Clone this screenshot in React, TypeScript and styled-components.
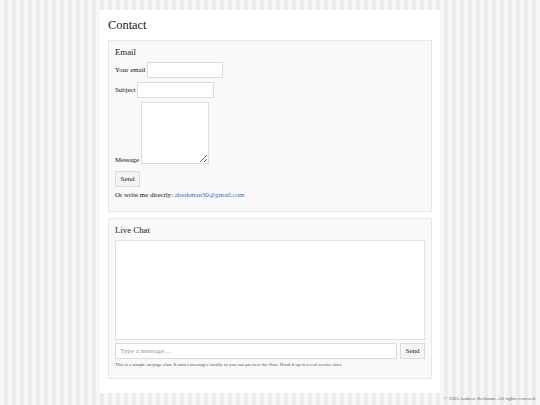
import styled, { createGlobalStyle } from 'styled-components';

const GlobalStyle = createGlobalStyle`
  html, body {
    margin: 0;
    padding: 0;
  }
  body {
    font-family: "Liberation Serif", "Times New Roman", serif;
    color: #111;
    background: repeating-linear-gradient(90deg, #f7f7f7 0 4px, #ececec 4px 8px);
    min-height: 405px;
  }
`;

const App = () => {
  return (
    <>
      <GlobalStyle />
      <StyleIn.Page>
        <StyleIn.Main>
          <StyleIn.Title>Contact</StyleIn.Title>

          <StyleIn.Panel>
            <StyleIn.PanelTitle>Email</StyleIn.PanelTitle>
            <StyleIn.Row>
              <label htmlFor="email">Your email</label>
              <StyleIn.Input id="email" type="email" $width={76} />
            </StyleIn.Row>
            <StyleIn.Row>
              <label htmlFor="subject">Subject</label>
              <StyleIn.Input id="subject" type="text" $width={77} />
            </StyleIn.Row>
            <StyleIn.Row $bottom>
              <label htmlFor="message">Message</label>
              <StyleIn.TextArea id="message" />
            </StyleIn.Row>
            <StyleIn.Button $width={25}>Send</StyleIn.Button>
            <StyleIn.Direct>
              Or write me directly: <a href="mailto:aberkman30@gmail.com">aberkman30@gmail.com</a>
            </StyleIn.Direct>
          </StyleIn.Panel>

          <StyleIn.Panel $bottom={10}>
            <StyleIn.PanelTitle>Live Chat</StyleIn.PanelTitle>
            <StyleIn.ChatLog />
            <StyleIn.ChatBar>
              <StyleIn.ChatInput type="text" placeholder="Type a message…" />
              <StyleIn.Button $width={25}>Send</StyleIn.Button>
            </StyleIn.ChatBar>
            <StyleIn.Note>
              This is a simple on-page chat. It stores messages locally so you can preview the flow. Hook it up to a real service later.
            </StyleIn.Note>
          </StyleIn.Panel>
        </StyleIn.Main>
        <StyleIn.Footer>© 2025 Andrew Berkman. All rights reserved.</StyleIn.Footer>
      </StyleIn.Page>
    </>
  );
};

const StyleIn = {
  Page: styled.div`
    width: 100%;
    display: flex;
    flex-direction: column;
    align-items: center;
    padding-top: 10px;
    box-sizing: border-box;
  `,
  Main: styled.main`
    width: 340px;
    background-color: #fff;
    padding: 8px 8px 14px;
    box-sizing: border-box;
  `,
  Title: styled.h1`
    margin: 0 0 8px;
    font-size: 12.4px;
    line-height: 14px;
    font-weight: normal;
    color: #1a1a1a;
  `,
  Panel: styled.section<{ $bottom?: number }>`
    background-color: #f9f9f9;
    border: 1px solid #e8e8e8;
    padding: 5px 6px ${(p) => p.$bottom ?? 12}px;
    font-size: 6.9px;
    margin-bottom: 6px;

    &:last-child {
      margin-bottom: 0;
    }
  `,
  PanelTitle: styled.h2`
    margin: 0 0 3.5px;
    font-size: 8.8px;
    line-height: 12px;
    font-weight: normal;
    color: #1a1a1a;
  `,
  Row: styled.div<{ $bottom?: boolean }>`
    display: flex;
    align-items: ${(p) => (p.$bottom ? 'flex-end' : 'center')};
    gap: 1.5px;
    margin-bottom: 4px;
    line-height: 9px;

    label {
      padding-bottom: ${(p) => (p.$bottom ? '0' : '0.5px')};
    }
  `,
  Input: styled.input<{ $width: number }>`
    width: ${(p) => p.$width}px;
    height: 16px;
    box-sizing: border-box;
    border: 1px solid #dcdcdc;
    background: #fff;
    margin: 0;
    padding: 0 3px;
    font: inherit;
    outline: none;
  `,
  TextArea: styled.textarea`
    width: 68px;
    height: 62.5px;
    box-sizing: border-box;
    border: 1px solid #dcdcdc;
    background: #fff;
    margin: 0;
    padding: 2px;
    font: inherit;
    outline: none;
  `,
  Button: styled.button<{ $width: number }>`
    width: ${(p) => p.$width}px;
    height: 15.5px;
    box-sizing: border-box;
    margin: 3px 0 0;
    padding: 0;
    border: 1px solid #dadada;
    background-color: #f4f4f4;
    font-family: inherit;
    font-size: 7px;
    color: #1a1a1a;
    cursor: pointer;
  `,
  Direct: styled.p`
    margin: 3.5px 0 0;
    line-height: 9px;

    a {
      color: #2f72c9;
      text-decoration: none;
    }
  `,
  ChatLog: styled.div`
    height: 100px;
    box-sizing: border-box;
    border: 1px solid #e2e2e2;
    background-color: #fff;
  `,
  ChatBar: styled.div`
    display: flex;
    gap: 3.5px;
    margin-top: 3.5px;

    button {
      margin: 0;
    }
  `,
  ChatInput: styled.input`
    flex: 1;
    height: 15.5px;
    box-sizing: border-box;
    border: 1px solid #dcdcdc;
    background: #fff;
    margin: 0;
    padding: 0 4px;
    font-family: inherit;
    font-size: 7px;
    color: #222;
    outline: none;

    &::placeholder {
      color: #9a9a9a;
    }
  `,
  Note: styled.p`
    margin: 3px 0 0;
    font-size: 4.8px;
    line-height: 6px;
    color: #555;
  `,
  Footer: styled.footer`
    width: 100%;
    box-sizing: border-box;
    margin-top: 3px;
    padding-right: 4px;
    text-align: right;
    font-size: 5px;
    line-height: 6px;
    color: #666;
  `,
};

export default App;
